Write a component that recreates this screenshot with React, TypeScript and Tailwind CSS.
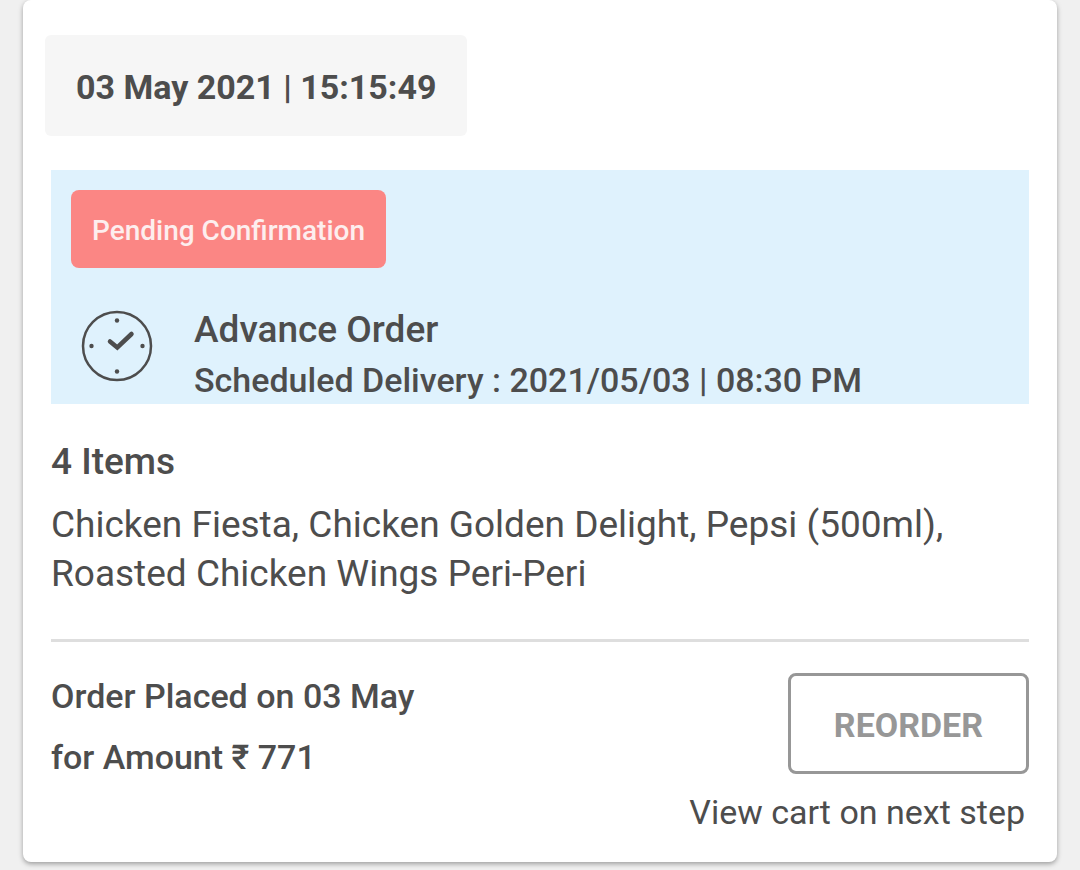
import { useId } from 'react'

function ScheduleClock() {
  return (
    <svg aria-hidden="true" className="h-18 w-18 shrink-0" fill="none" viewBox="0 0 72 72">
      <circle cx="36" cy="36" r="34" stroke="#4d4d4d" strokeWidth="2.5" />
      <g fill="#4d4d4d">
        <circle cx="36" cy="10.5" r="2.2" />
        <circle cx="36" cy="61.5" r="2.2" />
        <circle cx="10.5" cy="36" r="2.2" />
        <circle cx="61.5" cy="36" r="2.2" />
      </g>
      <path d="M29 31.5l7.300 6L50.500 24" stroke="#4d4d4d" strokeLinecap="round" strokeWidth="4.500" />
    </svg>
  )
}

function AdvanceOrder() {
  return (
    <section className="mt-[34px] bg-[#dff2fd] px-5 pt-5">
      <span className="inline-flex h-[78px] items-center rounded-lg bg-[#fb8684] px-[21px] pt-1 text-[28px] font-medium text-[#fdeeee]">
        Pending Confirmation
      </span>
      <div className="mt-9 flex gap-[41px] pl-[10px]">
        <div className="pt-[6px]">
          <ScheduleClock />
        </div>
        <div className="font-medium">
          <h2 className="text-[37px] leading-[52px]">Advance Order</h2>
          <p className="text-[34px] leading-[48px]">Scheduled Delivery : 2021/05/03 | 08:30 PM</p>
        </div>
      </div>
    </section>
  )
}

export default function App() {
  const hintId = useId()

  return (
    <main className="min-h-screen bg-[#f0f0f0] px-[23px] pb-2 font-['Roboto','Noto_Sans',sans-serif] text-[#4d4d4d]">
      <article className="rounded-lg bg-white px-7 pt-[35px] pb-6 shadow-[0_2px_5px_rgba(0,0,0,0.35)]">
        <time
          className="-ml-[6px] inline-flex h-[101px] items-center rounded-md bg-[#f6f6f6] px-[31px] pt-1 text-[34px] font-bold"
          dateTime="2021-05-03T15:15:49"
        >
          03 May 2021 | 15:15:49
        </time>

        <AdvanceOrder />

        <section className="mt-8 border-b-3 border-[#dedede] pb-[41px]">
          <h2 className="text-[37px] leading-[52px] font-medium">4 Items</h2>
          <p className="mt-3 text-[37px] leading-[49px]">
            Chicken Fiesta, Chicken Golden Delight, Pepsi (500ml), Roasted Chicken Wings Peri-Peri
          </p>
        </section>

        <footer className="flex items-start justify-between">
          <div className="mt-6 text-[34px] leading-[61px] font-medium">
            <p>Order Placed on 03 May</p>
            <p>for Amount ₹ 771</p>
          </div>
          <div className="mt-[31px] flex flex-col items-end">
            <button
              aria-describedby={hintId}
              className="h-[101px] rounded-lg border-3 border-[#979797] px-[43px] pt-1 text-[34px] font-bold text-[#979797]"
              type="button"
            >
              REORDER
            </button>
            <p className="mt-3 pr-1 text-[34px] leading-[52px]" id={hintId}>
              View cart on next step
            </p>
          </div>
        </footer>
      </article>
    </main>
  )
}
